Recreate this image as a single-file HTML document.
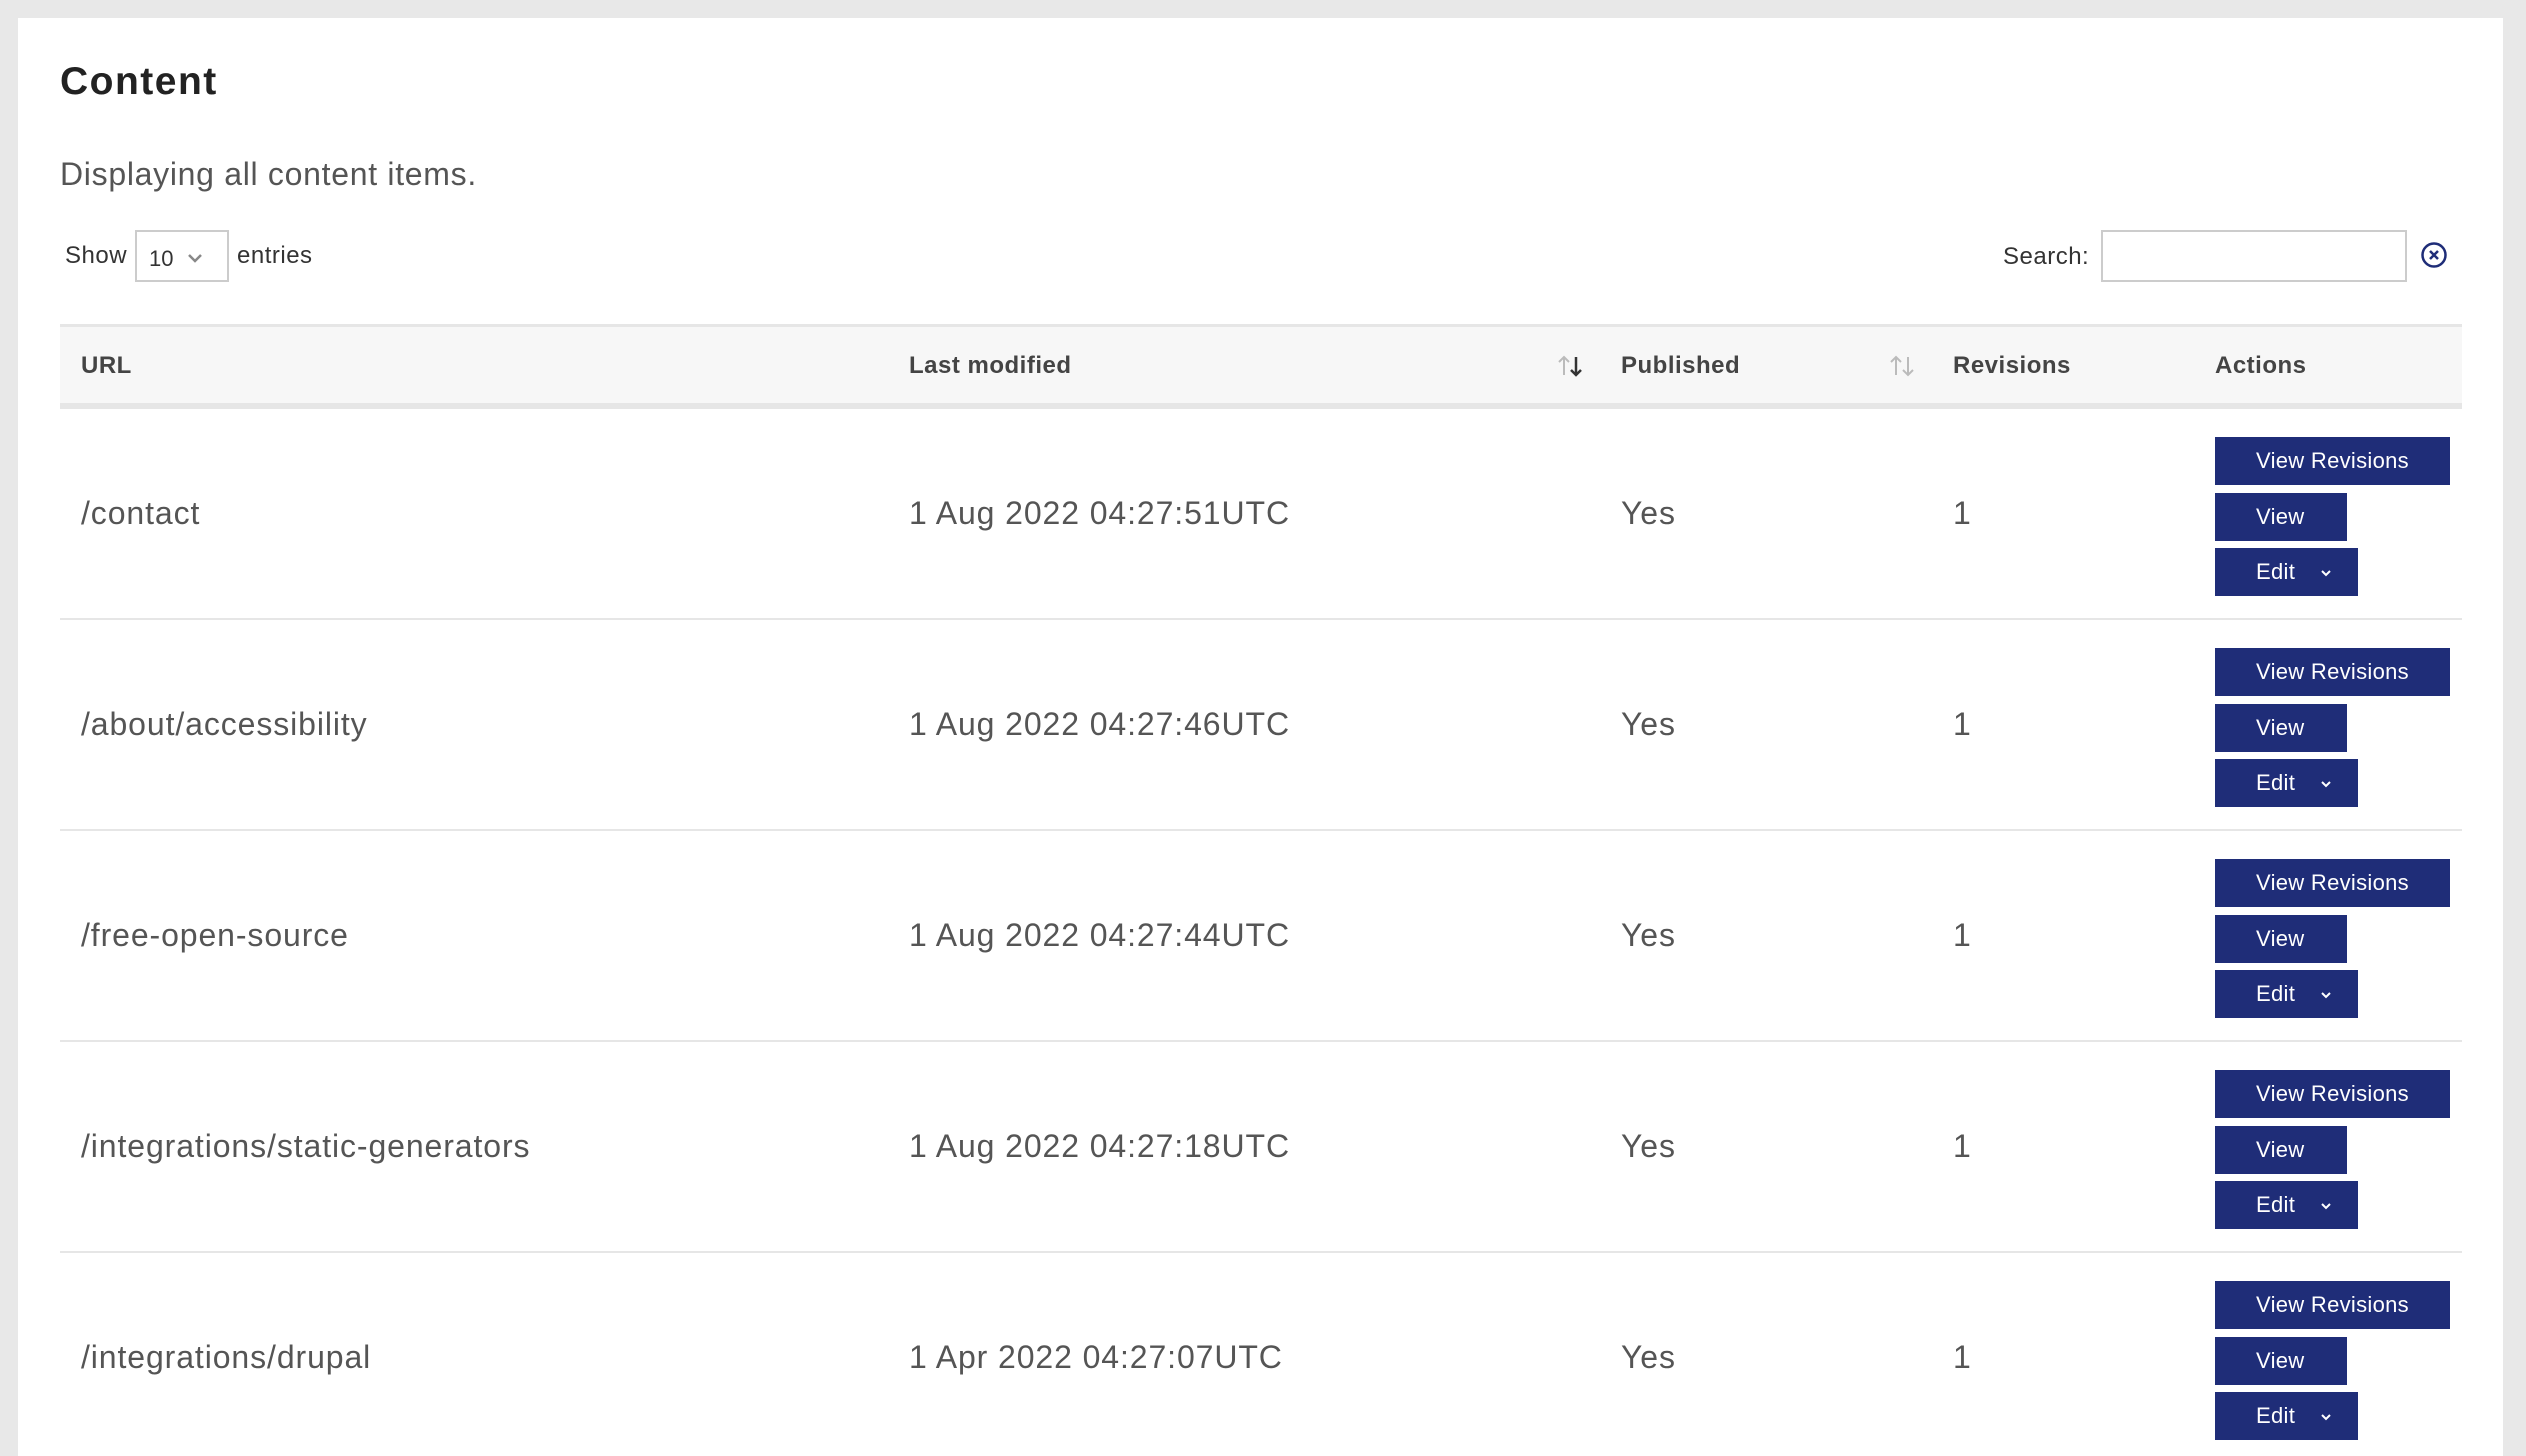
<!DOCTYPE html>
<html><head><meta charset="utf-8"><style>
*{margin:0;padding:0;box-sizing:border-box}
html,body{width:2526px;height:1456px;overflow:hidden}
body{background:#e8e8e8;font-family:"Liberation Sans",sans-serif;position:relative}
.panel{position:absolute;left:18px;top:18px;width:2485px;height:1438px;background:#fff}
.a{position:absolute;white-space:nowrap}
h1{position:absolute;left:60px;top:60px;font-size:39px;font-weight:bold;color:#222;letter-spacing:1.5px}
.th{position:absolute;top:324px;left:60px;width:2402px;height:85px;background:#f7f7f7;border-top:3px solid #e6e6e6;border-bottom:6px solid #e6e6e6}
.th span{position:absolute;top:25px;font-size:24px;font-weight:bold;color:#444;letter-spacing:0.5px}
.row{position:absolute;left:60px;width:2402px;height:211px;border-bottom:2px solid #e6e6e6}
.row .t{position:absolute;top:86px;font-size:32px;color:#555;letter-spacing:0.9px}
.btn{position:absolute;left:2155px;height:48px;background:#1f2d78;color:#fff;font-size:22px;line-height:48px;padding-left:41px;letter-spacing:0.3px}
</style></head><body>
<div class="panel"></div>
<h1>Content</h1>
<div class="a" style="left:60px;top:156px;font-size:32px;color:#555;letter-spacing:0.7px">Displaying all content items.</div>
<div class="a" style="left:65px;top:242px;font-size:24px;color:#333;letter-spacing:0.5px">Show</div>
<div class="a" style="left:135px;top:230px;width:94px;height:52px;border:2px solid #ccc;font-size:22px;color:#333;padding:14px 0 0 12px">10
<svg style="position:absolute;left:50px;top:20px" width="16" height="12" viewBox="0 0 16 12"><path d="M2 3 L8 9 L14 3" fill="none" stroke="#888" stroke-width="2.5"/></svg></div>
<div class="a" style="left:237px;top:242px;font-size:24px;color:#333;letter-spacing:0.5px">entries</div>
<div class="a" style="left:2003px;top:243px;font-size:24px;color:#333;letter-spacing:0.5px">Search:</div>
<div class="a" style="left:2101px;top:230px;width:306px;height:52px;border:2px solid #ccc"></div>
<svg class="a" style="left:2420px;top:241px" width="28" height="28" viewBox="0 0 28 28"><circle cx="14" cy="14" r="11.5" fill="none" stroke="#1f2d78" stroke-width="2.5"/><path d="M10 10 L18 18 M18 10 L10 18" stroke="#1f2d78" stroke-width="2.5"/></svg>
<div class="th">
<span style="left:21px">URL</span>
<span style="left:849px">Last modified</span>
<svg style="position:absolute;left:1496px;top:27px" width="30" height="24" viewBox="0 0 30 24"><path d="M8 21 V3 M3 8 L8 3 L13 8" fill="none" stroke="#bbb" stroke-width="2"/><path d="M20 3 V21 M15 16 L20 21 L25 16" fill="none" stroke="#333" stroke-width="2.5"/></svg>
<span style="left:1561px">Published</span>
<svg style="position:absolute;left:1828px;top:27px" width="30" height="24" viewBox="0 0 30 24"><path d="M8 21 V3 M3 8 L8 3 L13 8" fill="none" stroke="#bbb" stroke-width="2"/><path d="M20 3 V21 M15 16 L20 21 L25 16" fill="none" stroke="#bbb" stroke-width="2"/></svg>
<span style="left:1893px">Revisions</span>
<span style="left:2155px">Actions</span>
</div>

<div class="row" style="top:409px"><span class="t" style="left:21px">/contact</span><span class="t" style="left:849px">1 Aug 2022 04:27:51UTC</span><span class="t" style="left:1561px">Yes</span><span class="t" style="left:1893px">1</span>
<div class="btn" style="top:28px;width:235px">View Revisions</div><div class="btn" style="top:84px;width:132px">View</div><div class="btn" style="top:139px;width:143px">Edit<svg style="position:absolute;left:104px;top:20px" width="14" height="10" viewBox="0 0 14 10"><path d="M3 3 L7 7 L11 3" fill="none" stroke="#fff" stroke-width="2"/></svg></div></div>

<div class="row" style="top:620px"><span class="t" style="left:21px">/about/accessibility</span><span class="t" style="left:849px">1 Aug 2022 04:27:46UTC</span><span class="t" style="left:1561px">Yes</span><span class="t" style="left:1893px">1</span>
<div class="btn" style="top:28px;width:235px">View Revisions</div><div class="btn" style="top:84px;width:132px">View</div><div class="btn" style="top:139px;width:143px">Edit<svg style="position:absolute;left:104px;top:20px" width="14" height="10" viewBox="0 0 14 10"><path d="M3 3 L7 7 L11 3" fill="none" stroke="#fff" stroke-width="2"/></svg></div></div>

<div class="row" style="top:831px"><span class="t" style="left:21px">/free-open-source</span><span class="t" style="left:849px">1 Aug 2022 04:27:44UTC</span><span class="t" style="left:1561px">Yes</span><span class="t" style="left:1893px">1</span>
<div class="btn" style="top:28px;width:235px">View Revisions</div><div class="btn" style="top:84px;width:132px">View</div><div class="btn" style="top:139px;width:143px">Edit<svg style="position:absolute;left:104px;top:20px" width="14" height="10" viewBox="0 0 14 10"><path d="M3 3 L7 7 L11 3" fill="none" stroke="#fff" stroke-width="2"/></svg></div></div>

<div class="row" style="top:1042px"><span class="t" style="left:21px">/integrations/static-generators</span><span class="t" style="left:849px">1 Aug 2022 04:27:18UTC</span><span class="t" style="left:1561px">Yes</span><span class="t" style="left:1893px">1</span>
<div class="btn" style="top:28px;width:235px">View Revisions</div><div class="btn" style="top:84px;width:132px">View</div><div class="btn" style="top:139px;width:143px">Edit<svg style="position:absolute;left:104px;top:20px" width="14" height="10" viewBox="0 0 14 10"><path d="M3 3 L7 7 L11 3" fill="none" stroke="#fff" stroke-width="2"/></svg></div></div>

<div class="row" style="top:1253px;border-bottom:none"><span class="t" style="left:21px">/integrations/drupal</span><span class="t" style="left:849px">1 Apr 2022 04:27:07UTC</span><span class="t" style="left:1561px">Yes</span><span class="t" style="left:1893px">1</span>
<div class="btn" style="top:28px;width:235px">View Revisions</div><div class="btn" style="top:84px;width:132px">View</div><div class="btn" style="top:139px;width:143px">Edit<svg style="position:absolute;left:104px;top:20px" width="14" height="10" viewBox="0 0 14 10"><path d="M3 3 L7 7 L11 3" fill="none" stroke="#fff" stroke-width="2"/></svg></div></div>
</body></html>
